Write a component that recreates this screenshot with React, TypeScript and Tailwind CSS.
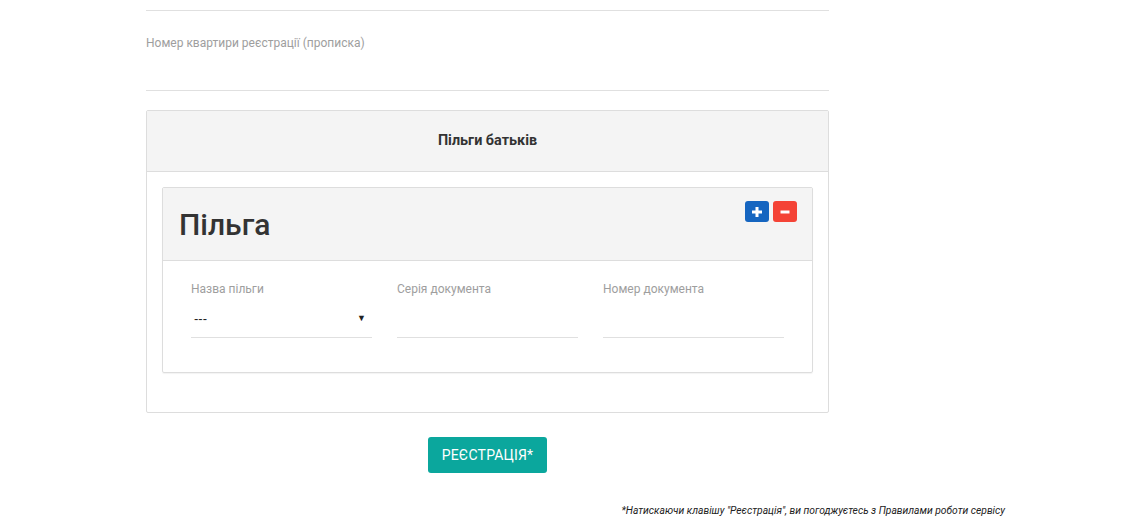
import React from 'react';

const Field = ({ label, children }: { label: string; children?: React.ReactNode }) => (
  <div className="flex flex-col">
    <span className="text-[12px] leading-[14px] text-[#9e9e9e]">{label}</span>
    <div className="mt-[8px] h-[34px] border-b border-[#e0e0e0] flex items-center">{children}</div>
  </div>
);

export default function App() {
  return (
    <div className="w-[1128px] h-[524px] bg-white font-['Roboto',sans-serif] text-[#333] overflow-hidden">
      <div className="ml-[146px] w-[683px] pt-[10px]">
        <div className="border-t border-[#e0e0e0]" />
        <div className="pt-[19px] h-[80px] border-b border-[#e0e0e0]">
          <span className="text-[12px] leading-[14px] text-[#9e9e9e]">Номер квартири реєстрації (прописка)</span>
        </div>

        <div className="mt-[19px] border border-[#ddd] rounded-[2px]">
          <div className="h-[61px] bg-[#f4f4f4] border-b border-[#ddd] flex items-center justify-center">
            <span className="text-[14.4px] font-bold text-[#333]">Пільги батьків</span>
          </div>
          <div className="px-[15px] pt-[15px] pb-[39px]">
            <div className="border border-[#ddd] rounded-[2px] shadow-[0_1px_1px_rgba(0,0,0,0.05)]">
              <div className="relative h-[73px] bg-[#f4f4f4] border-b border-[#ddd] px-[16px] flex items-center">
                <span className="text-[30px] font-medium text-[#333]">Пільга</span>
                <div className="absolute top-[13px] right-[15px] flex gap-[4px]">
                  <button className="w-[24px] h-[21px] rounded-[3px] bg-[#1565c0] flex items-center justify-center">
                    <svg width="12" height="12" viewBox="0 0 12 12"><path d="M6 1v10M1 6h10" stroke="white" strokeWidth="3" /></svg>
                  </button>
                  <button className="w-[24px] h-[21px] rounded-[3px] bg-[#f44336] flex items-center justify-center">
                    <svg width="12" height="12" viewBox="0 0 12 12"><path d="M1.5 6h9" stroke="white" strokeWidth="3" /></svg>
                  </button>
                </div>
              </div>
              <div className="grid grid-cols-3 gap-x-[25px] px-[28px] pt-[21px] pb-[34px]">
                <Field label="Назва пільги">
                  <div className="flex w-full items-center justify-between pl-[3px] pr-[6px] mb-[3px] text-[13px] text-[#222]">
                    <span className="font-['Liberation_Sans',sans-serif]">---</span>
                    <span className="text-[9px] text-[#222]">▼</span>
                  </div>
                </Field>
                <Field label="Серія документа" />
                <Field label="Номер документа" />
              </div>
            </div>
          </div>
        </div>

        <div className="flex justify-center mt-[24px]">
          <button className="w-[119px] h-[36px] rounded-[3px] bg-[#0ba79d] text-white text-[14px] tracking-[0.2px] uppercase">
            Реєстрація*
          </button>
        </div>
      </div>
      <div className="w-[1005px] text-right mt-[24px]">
        <span className="text-[10.3px] italic text-[#222]">*Натискаючи клавішу "Реєстрація", ви погоджуєтесь з Правилами роботи сервісу</span>
      </div>
    </div>
  );
}
